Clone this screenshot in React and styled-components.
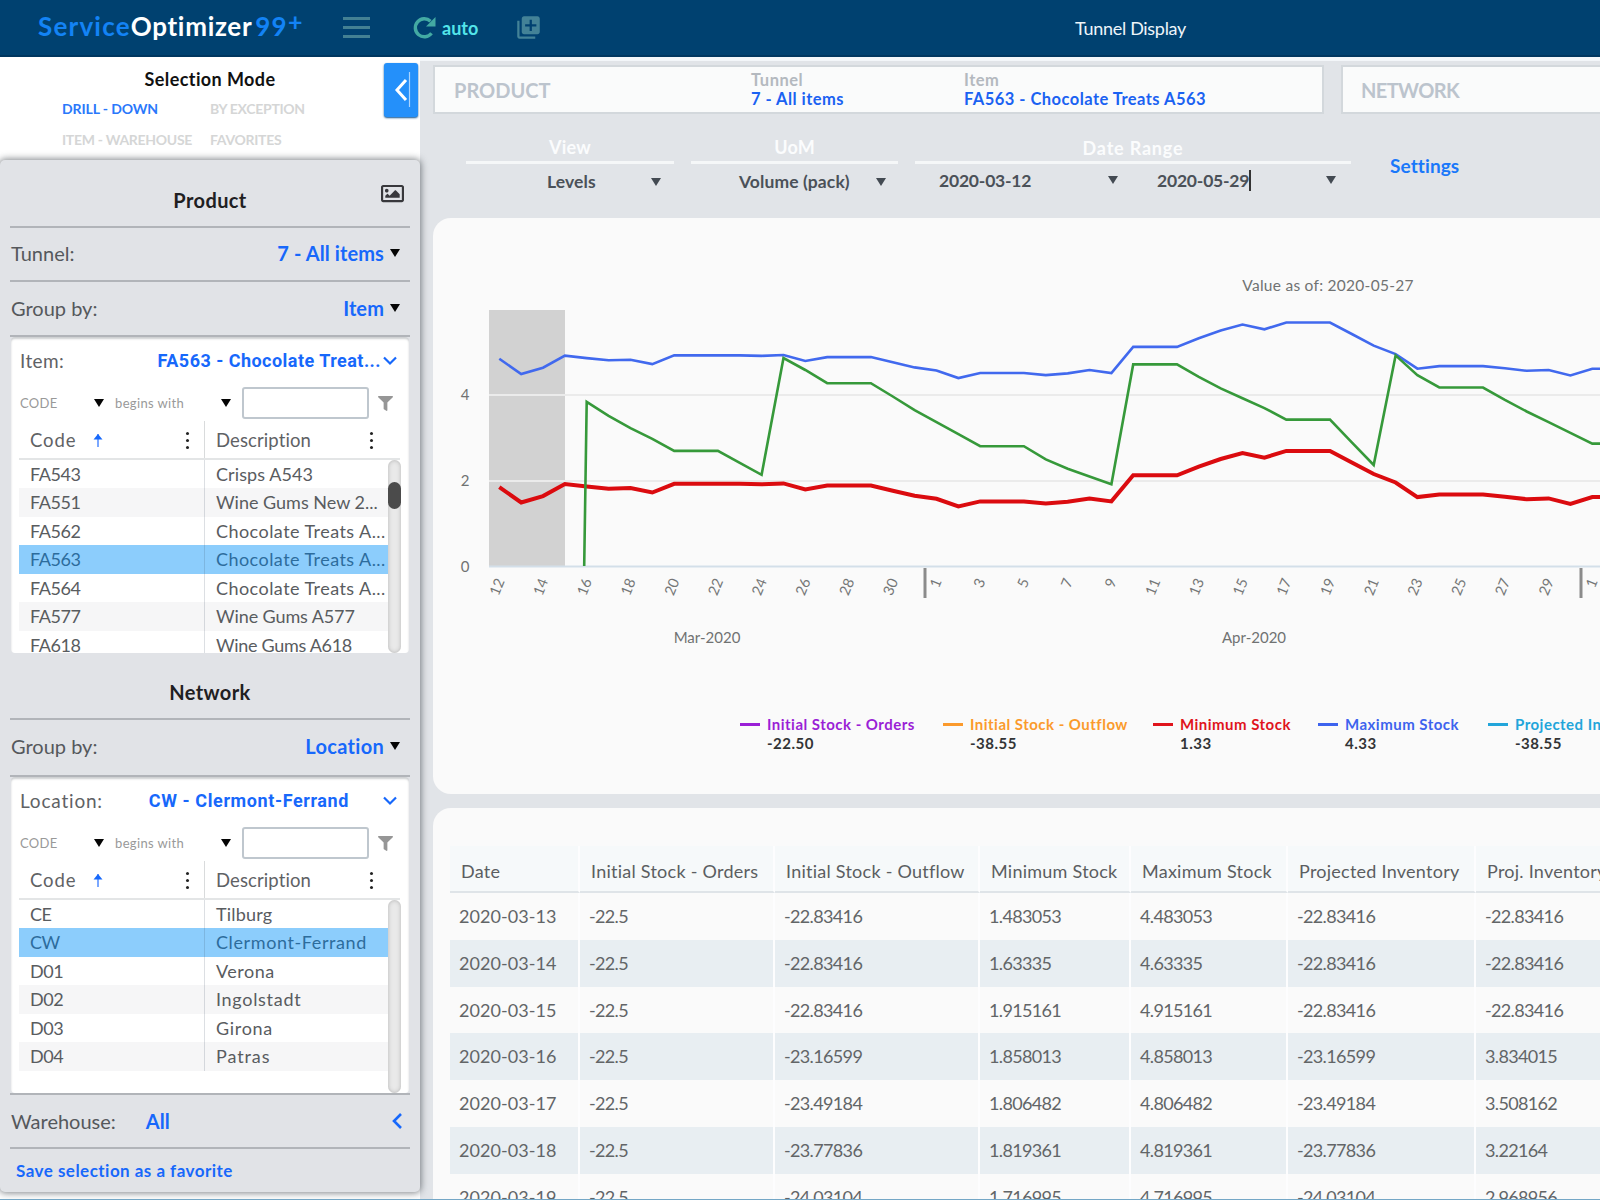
import React from "react";
import styled, { createGlobalStyle } from "styled-components";
import { FaFilter, FaRegImage } from "react-icons/fa";
import { MdLibraryAdd } from "react-icons/md";

// code, description, extra tracking of the description
const items = [
  ["FA543", "Crisps A543", 0.1],
  ["FA551", "Wine Gums New 2...", 0],
  ["FA562", "Chocolate Treats A...", 0.45],
  ["FA563", "Chocolate Treats A...", 0.45],
  ["FA564", "Chocolate Treats A...", 0.45],
  ["FA577", "Wine Gums A577", -0.1],
  ["FA618", "Wine Gums A618", -0.3],
];

const locations = [
  ["CE", "Tilburg", 0.2],
  ["CW", "Clermont-Ferrand", 0.6],
  ["D01", "Verona", 0.5],
  ["D02", "Ingolstadt", 0.7],
  ["D03", "Girona", 0.7],
  ["D04", "Patras", 0.9],
];

const legend = [
  { label: "Initial Stock - Orders", value: "-22.50", color: "#9a1fd6", width: 203 },
  { label: "Initial Stock - Outflow", value: "-38.55", color: "#fb9a2c", width: 210 },
  { label: "Minimum Stock", value: "1.33", color: "#e0141c", width: 165 },
  { label: "Maximum Stock", value: "4.33", color: "#3d63ee", width: 170 },
  { label: "Projected Inventory", value: "-38.55", color: "#22a5da", width: 200 },
];

const columns = [
  "Date",
  "Initial Stock - Orders",
  "Initial Stock - Outflow",
  "Minimum Stock",
  "Maximum Stock",
  "Projected Inventory",
  "Proj. Inventory",
];

const rows = [
  ["2020-03-13", "-22.5", "-22.83416", "1.483053", "4.483053", "-22.83416", "-22.83416"],
  ["2020-03-14", "-22.5", "-22.83416", "1.63335", "4.63335", "-22.83416", "-22.83416"],
  ["2020-03-15", "-22.5", "-22.83416", "1.915161", "4.915161", "-22.83416", "-22.83416"],
  ["2020-03-16", "-22.5", "-23.16599", "1.858013", "4.858013", "-23.16599", "3.834015"],
  ["2020-03-17", "-22.5", "-23.49184", "1.806482", "4.806482", "-23.49184", "3.508162"],
  ["2020-03-18", "-22.5", "-23.77836", "1.819361", "4.819361", "-23.77836", "3.22164"],
  ["2020-03-19", "-22.5", "-24.03104", "1.716995", "4.716995", "-24.03104", "2.968956"],
];

// one value per day, starting on 2020-03-12
const maximum = [
  4.84, 4.483, 4.633, 4.915, 4.858, 4.806, 4.819, 4.717, 4.92, 4.92, 4.92, 4.92, 4.91, 4.93,
  4.79, 4.88, 4.88, 4.88, 4.76, 4.64, 4.57, 4.39, 4.51, 4.51, 4.51, 4.46, 4.5, 4.58, 4.51,
  5.12, 5.12, 5.12, 5.32, 5.5, 5.64, 5.53, 5.69, 5.69, 5.69, 5.42, 5.15, 4.95, 4.61, 4.67,
  4.67, 4.67, 4.62, 4.56, 4.58, 4.45, 4.61, 4.61,
];
const minimum = maximum.map((v) => v - 3);

// starts on 2020-03-16
const projected = [
  3.834, 3.508, 3.22, 2.97, 2.69, 2.69, 2.69, 2.41, 2.13, 4.86, 4.58, 4.27, 4.27, 4.27, 3.96,
  3.64, 3.36, 3.08, 2.8, 2.8, 2.8, 2.49, 2.27, 2.09, 1.91, 4.71, 4.71, 4.71, 4.42, 4.15,
  3.92, 3.69, 3.42, 3.42, 3.42, 2.89, 2.36, 4.92, 4.46, 4.17, 4.17, 4.17, 3.88, 3.61, 3.36,
  3.11, 2.86, 2.86,
];

const dayX = (i) => 66.3 + i * 21.86;
const valueY = (v) => 348 - v * 42.8;
const toPoints = (values, start = 0) =>
  values.map((v, i) => `${dayX(i + start).toFixed(1)},${valueY(v).toFixed(1)}`).join(" ");

const ticks = [];
for (let i = 0; i <= 50; i += 2) {
  ticks.push({ i, label: i < 20 ? 12 + i : i < 50 ? i - 19 : 1 });
}

function StockChart() {
  return (
    <ChartSvg viewBox="0 0 1167 440" width="1167" height="440">
      <rect x="56" y="92" width="76" height="256" fill="#d2d2d2" />
      <line x1="56" x2="1167" y1="177" y2="177" stroke="#ebebeb" strokeWidth="2" />
      <line x1="56" x2="1167" y1="263" y2="263" stroke="#ebebeb" strokeWidth="2" />
      <line x1="56" x2="1167" y1="348.5" y2="348.5" stroke="#d3dfe9" strokeWidth="2" />
      <Note x="895" y="73">Value as of: 2020-05-27</Note>
      {[0, 2, 4].map((v) => (
        <AxisLabel key={v} x="32" y={valueY(v) + 5.5}>
          {v}
        </AxisLabel>
      ))}
      <polyline points={toPoints(maximum)} fill="none" stroke="#4169ee" strokeWidth="2.6" />
      <polyline points={toPoints(minimum)} fill="none" stroke="#db0b0f" strokeWidth="4" />
      <polyline
        points={`151.2,348 ${toPoints(projected, 4)}`}
        fill="none"
        stroke="#36993a"
        strokeWidth="2.6"
      />
      {ticks.map(({ i, label }) => (
        <TickLabel key={i} transform={`translate(${dayX(i) + 5.5} 363) rotate(-68)`}>
          {label}
        </TickLabel>
      ))}
      <rect x="490.5" y="350" width="3" height="30" fill="#8b8b8b" />
      <rect x="1146.5" y="350" width="3" height="30" fill="#8b8b8b" />
      <MonthLabel x="274" y="425">Mar-2020</MonthLabel>
      <MonthLabel x="821" y="425">Apr-2020</MonthLabel>
    </ChartSvg>
  );
}

function Picker({ label, value, wide, rows: data, selected, thumb }) {
  return (
    <PickerCard>
      <PickerTitle>
        <PickerLabel $wide={wide}>{label}</PickerLabel>
        <PickerValue $wide={wide}>{value}</PickerValue>
        <svg width="16" height="10" viewBox="0 0 16 10">
          <path d="M2 1.5l6 6 6-6" fill="none" stroke="#1768fb" strokeWidth="2.2" />
        </svg>
      </PickerTitle>
      <FilterRow>
        <FilterText $width={75} $indent={1}>CODE</FilterText>
        <Caret />
        <FilterText $width={117} $indent={11}>begins with</FilterText>
        <Caret />
        <FilterInput />
        <FaFilter size={15} color="#969696" />
      </FilterRow>
      <GridHead>
        <HeadCell $width={186} $tracking={0.9}>
          Code
          <svg width="10" height="15" viewBox="0 0 10 15">
            <path d="M5 1v13" stroke="#7ba8ff" strokeWidth="2" />
            <path d="M0.5 6.5L5 1l4.5 5.5z" fill="#1768fb" />
          </svg>
          <Dots />
        </HeadCell>
        <HeadCell $width={183} $tracking={0.1} $last>
          Description
          <Dots />
        </HeadCell>
      </GridHead>
      <GridBody>
        <GridRows>
          {data.map(([code, description, tracking], i) => (
            <GridRow key={code} $odd={i % 2 === 1} $selected={code === selected}>
              <GridCode>{code}</GridCode>
              <GridDescription $tracking={tracking}>{description}</GridDescription>
            </GridRow>
          ))}
        </GridRows>
        <ScrollTrack>{thumb && <ScrollThumb />}</ScrollTrack>
      </GridBody>
    </PickerCard>
  );
}

function Sidebar() {
  return (
    <Side>
      <ModePanel>
        <ModeTitle>Selection Mode</ModeTitle>
        <ModeGrid>
          <Mode $active>DRILL - DOWN</Mode>
          <Mode>BY EXCEPTION</Mode>
          <Mode>ITEM - WAREHOUSE</Mode>
          <Mode>FAVORITES</Mode>
        </ModeGrid>
        <CollapseButton>
          <svg width="34" height="54" viewBox="0 0 34 54">
            <path d="M22 17l-9 10 9 10" fill="none" stroke="#fff" strokeWidth="3" />
            <path d="M25.5 9v35" stroke="#a9d4ff" strokeWidth="1.2" />
          </svg>
        </CollapseButton>
      </ModePanel>
      <SelectionPanel>
        <SectionTitle $height={68} $top={16}>
          Product
          <ImageIcon>
            <FaRegImage size={23} color="#38383c" />
          </ImageIcon>
        </SectionTitle>
        <SelectRow $height={54} $lift={2}>
          Tunnel:
          <SelectValue>
            7 - All items
            <Caret />
          </SelectValue>
        </SelectRow>
        <SelectRow $height={55} $lift={2}>
          Group by:
          <SelectValue>
            Item
            <Caret />
          </SelectValue>
        </SelectRow>
        <Picker
          label="Item:"
          value="FA563 - Chocolate Treat..."
          wide
          rows={items}
          selected="FA563"
          thumb
        />
        <SectionTitle $height={67} $top={15}>Network</SectionTitle>
        <SelectRow $height={57} $lift={4}>
          Group by:
          <SelectValue $wide>
            Location
            <Caret />
          </SelectValue>
        </SelectRow>
        <Picker
          label="Location:"
          value="CW - Clermont-Ferrand"
          rows={locations}
          selected="CW"
        />
        <WarehouseRow>
          Warehouse:
          <WarehouseValue>All</WarehouseValue>
          <svg width="12" height="18" viewBox="0 0 12 18">
            <path d="M10 2L3 9l7 7" fill="none" stroke="#1768fb" strokeWidth="2.6" />
          </svg>
        </WarehouseRow>
        <SaveLink>Save selection as a favorite</SaveLink>
      </SelectionPanel>
    </Side>
  );
}

export default function App() {
  return (
    <Page>
      <GlobalStyle />
      <TopBar>
        <Logo>
          <LogoBlue>Service</LogoBlue>Optimizer<LogoBlue $gap>99</LogoBlue>
          <LogoPlus>+</LogoPlus>
        </Logo>
        <Burger>
          <span />
          <span />
          <span />
        </Burger>
        <AutoButton>
          <svg width="23" height="24" viewBox="0 0 23 24">
            <path
              d="M18.500 17.200A9 9 0 1 1 17.500 5.200"
              fill="none"
              stroke="#43aaa3"
              strokeWidth="3.400"
            />
            <path d="M22.500 1v9.500h-9.500z" fill="#43aaa3" />
          </svg>
          auto
        </AutoButton>
        <MdLibraryAdd size={27} color="#438297" />
        <PageTitle>Tunnel Display</PageTitle>
      </TopBar>
      <Body>
        <Sidebar />
        <Main>
          <Crumbs>
            <CrumbBox $width={891}>
              <CrumbTitle $width={297}>PRODUCT</CrumbTitle>
              <Crumb $width={213}>
                <CrumbLabel>Tunnel</CrumbLabel>
                <CrumbValue>7 - All items</CrumbValue>
              </Crumb>
              <Crumb $width={300}>
                <CrumbLabel>Item</CrumbLabel>
                <CrumbValue>FA563 - Chocolate Treats A563</CrumbValue>
              </Crumb>
            </CrumbBox>
            <CrumbBox $width={891}>
              <CrumbTitle $width={297} $tight>NETWORK</CrumbTitle>
            </CrumbBox>
          </Crumbs>
          <Controls>
            <Control $width={208}>
              <ControlLabel>View</ControlLabel>
              <ControlField>
                <ControlValue $left={81} $width={104}>Levels</ControlValue>
                <Caret $color="#434a52" />
              </ControlField>
            </Control>
            <Control $width={207}>
              <ControlLabel>UoM</ControlLabel>
              <ControlField>
                <ControlValue $left={48} $width={137}>Volume (pack)</ControlValue>
                <Caret $color="#434a52" />
              </ControlField>
            </Control>
            <Control $width={436}>
              <ControlLabel $low>Date Range</ControlLabel>
              <ControlField $raised>
                <ControlValue $left={24} $width={169} $date>2020-03-12</ControlValue>
                <Caret $color="#434a52" />
                <ControlValue $left={39} $width={169} $date>
                  2020-05-29
                  <TextCursor />
                </ControlValue>
                <Caret $color="#434a52" />
              </ControlField>
            </Control>
            <SettingsLink>Settings</SettingsLink>
          </Controls>
          <ChartCard>
            <StockChart />
            <Legend>
              {legend.map((entry) => (
                <LegendItem key={entry.label} $width={entry.width}>
                  <LegendDash $color={entry.color} />
                  <LegendText>
                    <LegendLabel $color={entry.color}>{entry.label}</LegendLabel>
                    <LegendValue>{entry.value}</LegendValue>
                  </LegendText>
                </LegendItem>
              ))}
            </Legend>
          </ChartCard>
          <TableCard>
            <TableGrid>
              {columns.map((name) => (
                <ColumnHead key={name}>{name}</ColumnHead>
              ))}
              {rows.map((row, r) =>
                row.map((value, c) => (
                  <Cell key={`${r}-${c}`} $striped={r % 2 === 1} $date={c === 0}>
                    {value}
                  </Cell>
                ))
              )}
            </TableGrid>
          </TableCard>
        </Main>
      </Body>
    </Page>
  );
}

const GlobalStyle = createGlobalStyle`
  * {
    box-sizing: border-box;
  }

  body {
    margin: 0;
    overflow: hidden;
    font-family: Lato, "Liberation Sans", sans-serif;
  }
`;

const Page = styled.div`
  width: 1600px;
  height: 1200px;
  display: flex;
  flex-direction: column;
  overflow: hidden;
  background: #e1e4e8;
  border-bottom: 1px solid #74a7c6;
`;

const TopBar = styled.header`
  flex: none;
  height: 57px;
  display: flex;
  align-items: center;
  background: #004170;
  border-bottom: 2px solid #00365f;
`;

const Logo = styled.div`
  display: flex;
  align-items: center;
  width: 304px;
  height: 50px;
  padding-left: 38px;
  margin-bottom: 4px;
  color: #fff;
  font-size: 26px;
  font-weight: 700;
  letter-spacing: 0.7px;
`;

const LogoBlue = styled.span`
  color: #1383f5;
  letter-spacing: 1.2px;
  margin-left: ${(p) => (p.$gap ? "3px" : 0)};
`;

const LogoPlus = styled(LogoBlue)`
  margin-top: -9px;
  font-size: 25px;
`;

const Burger = styled.div`
  display: flex;
  flex-direction: column;
  gap: 6px;
  width: 27px;
  margin-left: 39px;

  span {
    height: 3px;
    background: #438093;
  }
`;

const AutoButton = styled.div`
  display: flex;
  align-items: center;
  gap: 6px;
  width: 102px;
  margin-left: 43px;
  color: #53e4ea;
  font-size: 18px;
  font-weight: 700;
`;

const PageTitle = styled.div`
  margin-left: 533px;
  color: #eef5fa;
  font-size: 18px;
  letter-spacing: -0.3px;
`;

const Body = styled.div`
  flex: 1;
  min-height: 0;
  display: flex;
`;

const Side = styled.aside`
  flex: none;
  width: 420px;
  background: #fff;
`;

const ModePanel = styled.div`
  position: relative;
  height: 103px;
  padding-top: 11px;
`;

const ModeTitle = styled.div`
  text-align: center;
  color: #111;
  font-size: 18px;
  line-height: 22px;
  font-weight: 700;
  letter-spacing: 0.4px;
`;

const ModeGrid = styled.div`
  display: grid;
  grid-template-columns: 148px 120px;
  row-gap: 13px;
  padding: 10px 0 0 62px;
`;

const Mode = styled.div`
  color: ${(p) => (p.$active ? "#2a78fb" : "#d5d6d6")};
  font-size: 14px;
  line-height: 18px;
  font-weight: 700;
  letter-spacing: ${(p) => (p.$active ? "-0.1px" : "-0.3px")};
  white-space: nowrap;
`;

const CollapseButton = styled.div`
  position: absolute;
  top: 6px;
  right: 2px;
  width: 34px;
  height: 54px;
  border-radius: 3px;
  background: #2490fa;
  box-shadow: 0 1px 2px #0e528f;
`;

const SelectionPanel = styled.div`
  position: relative;
  height: 1032px;
  padding: 0 10px;
  background: #e1e3e7;
  border-radius: 5px;
  box-shadow: 0 0 7px 1px rgba(60, 66, 72, 0.65);
`;

const SectionTitle = styled.div`
  position: relative;
  height: ${(p) => p.$height}px;
  padding-top: ${(p) => p.$top + 12}px;
  border-bottom: 2px solid #b1b4b9;
  text-align: center;
  color: #1f2022;
  font-size: 20px;
  line-height: 24px;
  font-weight: 700;
  letter-spacing: 0.4px;
`;

const ImageIcon = styled.div`
  position: absolute;
  top: 22px;
  right: 6px;
`;

const SelectRow = styled.div`
  height: ${(p) => p.$height}px;
  display: flex;
  align-items: center;
  justify-content: space-between;
  padding: 0 10px ${(p) => p.$lift}px 1px;
  border-bottom: 2px solid #b1b4b9;
  color: #55585c;
  font-size: 20px;
`;

const SelectValue = styled.div`
  display: flex;
  align-items: center;
  gap: 6px;
  color: #1768fb;
  font-weight: 700;
  letter-spacing: ${(p) => (p.$wide ? 0.3 : 0.1)}px;
`;

const Caret = styled.i`
  width: 0;
  height: 0;
  border: 5px solid transparent;
  border-top: 8px solid ${(p) => p.$color || "#050505"};
  border-bottom: 0;
`;

const PickerCard = styled.div`
  height: 316px;
  display: flex;
  flex-direction: column;
  margin: 0 1px;
  padding: 0 8px;
  overflow: hidden;
  background: #fff;
  border-radius: 4px;
  box-shadow: inset 0 2px 2px rgba(90, 96, 102, 0.3);
`;

const PickerTitle = styled.div`
  flex: none;
  height: 48px;
  display: flex;
  align-items: center;
  padding: 0 3px 1px 1px;
`;

const PickerLabel = styled.div`
  color: #5f6265;
  font-size: 19px;
  letter-spacing: ${(p) => (p.$wide ? 0.4 : 0.8)}px;
`;

const PickerValue = styled.div`
  flex: 1;
  padding-right: ${(p) => (p.$wide ? 1 : 33)}px;
  text-align: right;
  color: #1768fb;
  font-family: Roboto, "Liberation Sans", sans-serif;
  font-size: 18px;
  font-weight: 700;
  letter-spacing: ${(p) => (p.$wide ? 0.47 : 0.6)}px;
`;

const FilterRow = styled.div`
  flex: none;
  height: 36px;
  display: flex;
  align-items: center;
`;

const FilterText = styled.div`
  width: ${(p) => p.$width}px;
  padding-left: ${(p) => p.$indent}px;
  color: #999;
  font-size: 13px;
  letter-spacing: 0.35px;
`;

const FilterInput = styled.div`
  width: 127px;
  height: 32px;
  margin: 0 9px 0 11px;
  border: 2px solid #bfc7ce;
  border-radius: 3px;
`;

const GridHead = styled.div`
  flex: none;
  display: flex;
  height: 38.5px;
  width: 381px;
  border-bottom: 2px solid #e3e5e6;
`;

const HeadCell = styled.div`
  width: ${(p) => p.$width}px;
  display: flex;
  align-items: center;
  padding: 2px 15px 0 11px;
  border-right: ${(p) => (p.$last ? 0 : "1px solid #d9dbdc")};
  color: #5f6265;
  font-size: 18.5px;
  letter-spacing: ${(p) => p.$tracking}px;

  svg {
    margin-left: 17px;
  }
`;

const Dots = styled.span`
  width: 3px;
  height: 3px;
  margin-left: auto;
  border-radius: 50%;
  background: #222;
  box-shadow: 0 -7px #222, 0 7px #222;
`;

const GridBody = styled.div`
  flex: 1;
  min-height: 0;
  display: flex;
`;

const GridRows = styled.div`
  width: 369px;
  overflow: hidden;
`;

const GridRow = styled.div`
  height: 28.6px;
  display: flex;
  align-items: center;
  background: ${(p) => (p.$selected ? "#8ccdfc" : p.$odd ? "#f6f6f7" : "#fff")};
  color: ${(p) => (p.$selected ? "#2d6c9c" : "#595c5f")};
  font-size: 18px;
  line-height: 28.6px;
  white-space: nowrap;
`;

const GridCode = styled.div`
  width: 186px;
  padding-left: 11px;
  border-right: 1px solid rgba(60, 80, 100, 0.18);
  letter-spacing: -0.4px;
`;

const GridDescription = styled.div`
  padding-left: 11px;
  letter-spacing: ${(p) => p.$tracking}px;
`;

const ScrollTrack = styled.div`
  width: 13px;
  padding-top: 22px;
  border-radius: 7px;
  background: #e9e9e9;
  box-shadow: inset 0 0 4px #b5b5b5;
`;

const ScrollThumb = styled.div`
  height: 27px;
  border-radius: 7px;
  background: #4b4b4b;
`;

const WarehouseRow = styled.div`
  height: 56px;
  display: flex;
  align-items: center;
  padding: 0 7px 0 1px;
  border-top: 2px solid #b1b4b9;
  border-bottom: 2px solid #b1b4b9;
  color: #55585c;
  font-size: 20px;
`;

const WarehouseValue = styled.div`
  flex: 1;
  margin-left: 30px;
  color: #1768fb;
  font-weight: 700;
`;

const SaveLink = styled.div`
  padding: 10px 0 0 6px;
  color: #1768fb;
  font-size: 17px;
  line-height: 24px;
  font-weight: 700;
  letter-spacing: 0.47px;
`;

const Main = styled.main`
  flex: 1;
  min-width: 0;
  display: flex;
  flex-direction: column;
  padding-left: 13px;
  border-top: 4px solid #f3f6f9;
`;

const Crumbs = styled.div`
  flex: none;
  display: flex;
  gap: 17px;
  padding-top: 4px;
`;

const CrumbBox = styled.div`
  flex: none;
  width: ${(p) => p.$width}px;
  height: 49px;
  display: flex;
  align-items: center;
  padding-left: 19px;
  background: #fafbfb;
  border: 2px solid #d3d8dc;
`;

const CrumbTitle = styled.div`
  width: ${(p) => p.$width}px;
  margin-left: ${(p) => (p.$tight ? "-1px" : 0)};
  color: #bcc4cd;
  font-size: 20px;
  font-weight: 700;
  letter-spacing: ${(p) => (p.$tight ? "-0.6px" : 0)};
`;

const Crumb = styled.div`
  width: ${(p) => p.$width}px;
  font-size: 16.5px;
  line-height: 19px;
  font-weight: 700;
`;

const CrumbLabel = styled.div`
  color: #b4b9bf;
  letter-spacing: 0.5px;
`;

const CrumbValue = styled.div`
  color: #1a62f2;
  letter-spacing: 0.46px;
  white-space: nowrap;
`;

const Controls = styled.div`
  flex: none;
  height: 104px;
  display: flex;
  gap: 17px;
  padding: 21px 0 0 33px;
`;

const Control = styled.div`
  width: ${(p) => p.$width}px;
`;

const ControlLabel = styled.div`
  height: 29px;
  border-bottom: 3px solid #f5f7f8;
  text-align: center;
  color: #fbfcfd;
  font-size: 18px;
  line-height: ${(p) => (p.$low ? 26 : 24)}px;
  font-weight: 700;
  letter-spacing: ${(p) => (p.$low ? "0.8px" : "0.2px")};
`;

const ControlField = styled.div`
  display: flex;
  align-items: center;
  height: ${(p) => (p.$raised ? 32 : 35)}px;
`;

const ControlValue = styled.div`
  display: flex;
  width: ${(p) => p.$width}px;
  margin-left: ${(p) => p.$left}px;
  color: #4b5158;
  font-size: 17.5px;
  font-weight: 700;
  letter-spacing: ${(p) => (p.$date ? "-0.2px" : "0.1px")};
  white-space: nowrap;
`;

const TextCursor = styled.span`
  width: 1.5px;
  height: 21px;
  background: #333;
`;

const SettingsLink = styled.div`
  padding: 19px 0 0 22px;
  color: #1a78fa;
  font-size: 19px;
  line-height: 24px;
  font-weight: 700;
  letter-spacing: 0.1px;
`;

const ChartCard = styled.section`
  flex: none;
  height: 576px;
  overflow: hidden;
  background: #fafafa;
  border-radius: 18px 0 0 18px;
`;

const ChartSvg = styled.svg`
  display: block;
`;

const Note = styled.text`
  fill: #707272;
  font-size: 15.5px;
  letter-spacing: 0.27px;
  text-anchor: middle;
`;

const AxisLabel = styled.text`
  fill: #707272;
  font-size: 15px;
  text-anchor: middle;
`;

const TickLabel = styled.text`
  fill: #757777;
  font-size: 14.5px;
  text-anchor: end;
`;

const MonthLabel = styled.text`
  fill: #707272;
  font-size: 15px;
  text-anchor: middle;
`;

const Legend = styled.div`
  display: flex;
  width: 1000px;
  padding: 57px 0 0 307px;
`;

const LegendItem = styled.div`
  flex: none;
  width: ${(p) => p.$width}px;
  display: flex;
  gap: 7px;
`;

const LegendDash = styled.span`
  width: 20px;
  height: 3px;
  margin-top: 8px;
  background: ${(p) => p.$color};
`;

const LegendText = styled.div`
  font-size: 15px;
  line-height: 19px;
  font-weight: 700;
  letter-spacing: 0.48px;
  white-space: nowrap;
`;

const LegendLabel = styled.div`
  color: ${(p) => p.$color};
`;

const LegendValue = styled.div`
  color: #323436;
`;

const TableCard = styled.section`
  flex: 1;
  min-height: 0;
  margin-top: 14px;
  padding: 38px 0 0 17px;
  overflow: hidden;
  background: #fafafa;
  border-radius: 18px 0 0 0;
`;

const TableGrid = styled.div`
  display: grid;
  grid-template-columns: 130px 195px 205px 151px 157px 188px 200px;
  grid-template-rows: 47px;
  grid-auto-rows: 46.8px;
`;

const ColumnHead = styled.div`
  padding: 4px 0 0 11px;
  background: #f6f9fa;
  border-right: 2px solid #fdfdfe;
  border-bottom: 2px solid #dfe4e8;
  color: #5b5e61;
  font-size: 18px;
  line-height: 42px;
  letter-spacing: 0.25px;
  white-space: nowrap;
`;

const Cell = styled.div`
  padding-left: 9px;
  background: ${(p) => (p.$striped ? "#e8eef2" : "#fafafa")};
  border-right: 2px solid #fdfdfe;
  color: #626567;
  font-size: 18px;
  line-height: 47px;
  letter-spacing: ${(p) => (p.$date ? "0.05px" : "-0.65px")};
`;
